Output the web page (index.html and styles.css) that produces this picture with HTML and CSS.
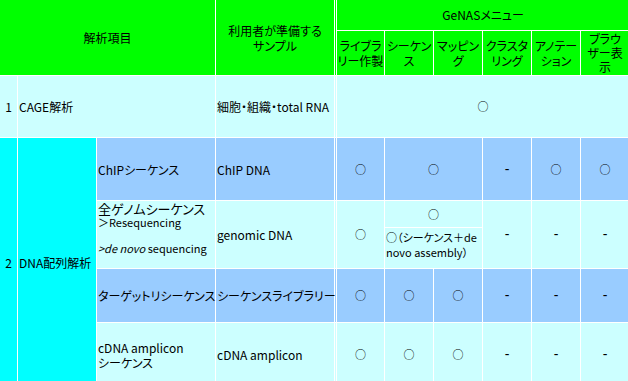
FILE: index.html
```html
<!DOCTYPE html>
<html>
<head>
    <meta charset="UTF-8">
    <title>GeNAS 解析メニュー</title>
    <link rel="stylesheet" href="styles.css">
</head>
<body>
    <table class="menu">
        <colgroup>
            <col class="c-no">
            <col class="c-group">
            <col class="c-item">
            <col class="c-sample">
            <col class="c-gap">
            <col class="c-lib">
            <col class="c-step">
            <col class="c-step">
            <col class="c-step">
            <col class="c-step">
            <col class="c-step">
        </colgroup>
        <tr class="r-top head">
            <td colspan="3" rowspan="2">解析項目</td>
            <td rowspan="2" class="two">利用者が準備する<br>サンプル</td>
            <td rowspan="2"></td>
            <td colspan="6">GeNASメニュー</td>
        </tr>
        <tr class="r-sub head">
            <td class="two">ライブラ<br>リー作製</td>
            <td class="two">シーケン<br>ス</td>
            <td class="two">マッピン<br>グ</td>
            <td class="two">クラスタ<br>リング</td>
            <td class="two">アノテー<br>ション</td>
            <td>ブラウ<br>ザー表<br>示</td>
        </tr>
        <tr class="r-cage pale">
            <td class="num">1</td>
            <td colspan="2" class="txt">CAGE解析</td>
            <td class="txt">細胞・組織・total RNA</td>
            <td></td>
            <td colspan="6" class="mark">○</td>
        </tr>
        <tr class="r-chip blue">
            <td rowspan="5" class="num cyan">2</td>
            <td rowspan="5" class="txt cyan">DNA配列解析</td>
            <td class="txt">ChIPシーケンス</td>
            <td class="txt">ChIP DNA</td>
            <td></td>
            <td class="mark">○</td>
            <td colspan="2" class="mark">○</td>
            <td class="dash">-</td>
            <td class="mark">○</td>
            <td class="mark">○</td>
        </tr>
        <tr class="r-gtop pale">
            <td rowspan="2" class="txt genome">
                <span class="big">全ゲノムシーケンス</span><br>
                ＞Resequencing<br>
                <br>
                <i>&gt;de novo</i> sequencing
            </td>
            <td rowspan="2" class="txt">genomic DNA</td>
            <td rowspan="2"></td>
            <td rowspan="2" class="mark">○</td>
            <td colspan="2" class="mark">○</td>
            <td rowspan="2" class="dash">-</td>
            <td rowspan="2" class="dash">-</td>
            <td rowspan="2" class="dash">-</td>
        </tr>
        <tr class="r-gbot pale">
            <td colspan="2" class="txt note">○（シーケンス＋de<br>novo assembly）</td>
        </tr>
        <tr class="r-target blue">
            <td class="txt">ターゲットリシーケンス</td>
            <td class="txt">シーケンスライブラリー</td>
            <td></td>
            <td class="mark">○</td>
            <td class="mark">○</td>
            <td class="mark">○</td>
            <td class="dash">-</td>
            <td class="dash">-</td>
            <td class="dash">-</td>
        </tr>
        <tr class="r-cdna pale">
            <td class="txt">cDNA amplicon<br>シーケンス</td>
            <td class="txt">cDNA amplicon</td>
            <td></td>
            <td class="mark">○</td>
            <td class="mark">○</td>
            <td class="mark">○</td>
            <td class="dash">-</td>
            <td class="dash">-</td>
            <td class="dash">-</td>
        </tr>
    </table>
</body>
</html>
```

FILE: styles.css
```css
body {
    margin: 0;
    background: #fff;
    overflow: hidden;
    font-family: "Noto Sans CJK JP", "Liberation Sans", sans-serif;
    font-size: 12px;
    font-feature-settings: "palt";
    color: #000;
}

.menu {
    table-layout: fixed;
    width: 631px;
    margin: -1px 0 0 -1px;
    border-collapse: separate;
    border-spacing: 1px;
    background: #fff;
}

.menu td {
    padding: 0;
    line-height: 15px;
    vertical-align: middle;
}

.c-no { width: 17px; }
.c-group { width: 78px; }
.c-item { width: 118px; }
.c-sample { width: 118px; }
.c-gap { width: 1px; }
.c-lib { width: 47px; }
.c-step { width: 48px; }

/* row heights */
.r-top { height: 30px; }
.r-sub { height: 44px; }
.r-cage { height: 61px; }
.r-chip { height: 62px; }
.r-gtop { height: 26px; }
.r-gbot { height: 40px; }
.r-target { height: 53px; }
.r-cdna { height: 63px; }

/* row colours */
.head td { background: #00ff00; text-align: center; line-height: 14px; }
.menu .head td.two { line-height: 15px; }
.pale td { background: #ccffff; }
.blue td { background: #99ccff; }
.menu td.cyan { background: #00ffff; }

.num { text-align: center; }
.txt { text-align: left; padding-left: 1px !important; white-space: nowrap; }
.mark { text-align: center; font-size: 11px; }
.dash {
    text-align: center;
    font-family: "Liberation Sans", sans-serif;
    font-size: 14px;
}

.genome {
    vertical-align: top !important;
    font-size: 11px;
    line-height: 13px !important;
}
.genome .big { font-size: 13px; line-height: 15px; }

.note {
    font-size: 11px;
    vertical-align: top !important;
    padding-top: 2px !important;
}
```
